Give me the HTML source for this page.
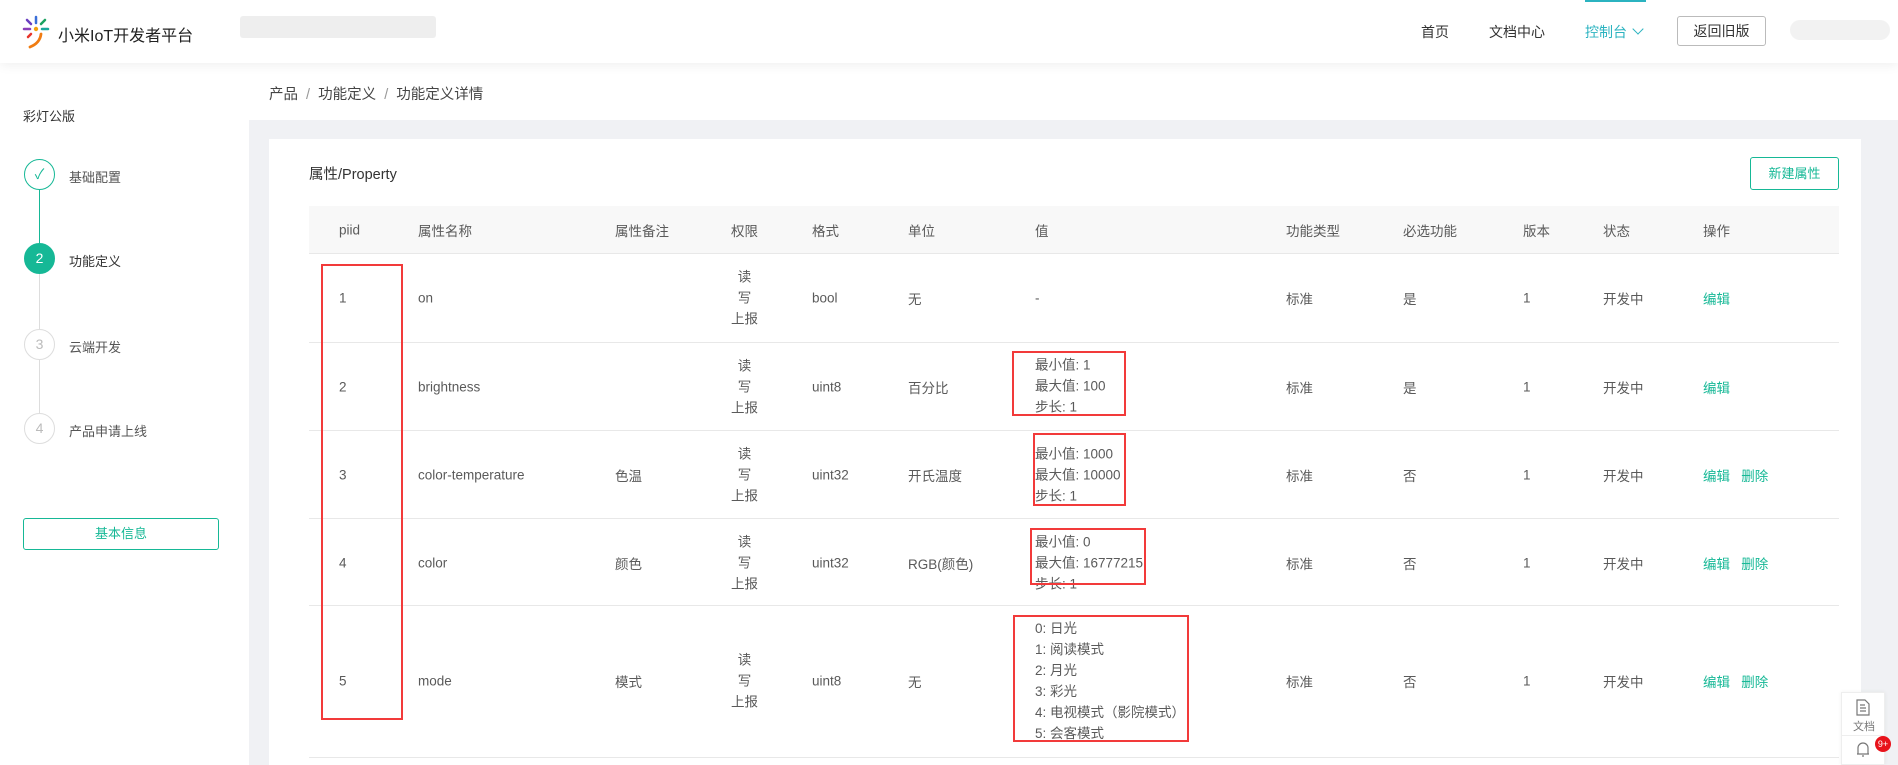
<!DOCTYPE html>
<html><head><meta charset="utf-8"><style>
*{margin:0;padding:0;box-sizing:border-box}
body{width:1898px;height:765px;overflow:hidden;background:#fff;font-family:"Liberation Sans","Noto Sans CJK SC",sans-serif;color:#333;position:relative;font-size:14px}
.a{position:absolute;white-space:nowrap}
.hdr{position:absolute;left:0;top:0;width:1898px;height:63px;background:#fff;box-shadow:0 3px 10px rgba(0,0,0,.06);z-index:2}
.gray{position:absolute;left:249px;top:120px;width:1649px;height:645px;background:#f0f1f4}
.card{position:absolute;left:269px;top:139px;width:1592px;height:626px;background:#fff}
.th{position:absolute;left:309px;top:206px;width:1530px;height:48px;background:#f8f8f8;border-bottom:1px solid #e8e8e8}
.hl{position:absolute;left:309px;width:1530px;height:1px;background:#e8e8e8}
.c{color:#5a5a5a;font-size:13.5px;transform:translateY(-50%)}
.t{color:#16b896}
.red{position:absolute;border:2px solid #f23a3a}
.circ{position:absolute;width:31px;height:31px;border-radius:50%;left:24px;text-align:center;line-height:29px;font-size:14px}
.vline{position:absolute;left:39px;width:1px}
.ml{line-height:21px}
</style></head><body>
<div class="hdr">
  <svg class="a" style="left:22px;top:15px" width="28" height="34" viewBox="0 0 28 34">
    <line x1="14" y1="2" x2="14" y2="8" stroke="#3a6fd8" stroke-width="2.5" stroke-linecap="round"/>
    <line x1="5" y1="5" x2="9" y2="9" stroke="#6a3fc0" stroke-width="2.5" stroke-linecap="round"/>
    <line x1="23" y1="5" x2="19" y2="9" stroke="#1aa260" stroke-width="2.5" stroke-linecap="round"/>
    <line x1="2" y1="14" x2="8" y2="14" stroke="#8a3fb8" stroke-width="2.5" stroke-linecap="round"/>
    <line x1="20" y1="14" x2="26" y2="14" stroke="#19a89b" stroke-width="2.5" stroke-linecap="round"/>
    <circle cx="14" cy="14" r="2.2" fill="#f2a20c"/>
    <line x1="6" y1="22" x2="9" y2="19" stroke="#e8352b" stroke-width="2.5" stroke-linecap="round"/>
    <path d="M19 19 Q18 28 8 32" stroke="#f07c12" stroke-width="2.8" fill="none" stroke-linecap="round"/>
  </svg>
  <div class="a" style="left:58px;top:22px;font-size:16px;color:#222">小米IoT开发者平台</div>
  <div class="a" style="left:240px;top:16px;width:196px;height:22px;background:#eaeaea;border-radius:3px;opacity:.8"></div>
  <div class="a" style="left:1421px;top:22px;font-size:14px">首页</div>
  <div class="a" style="left:1489px;top:22px;font-size:14px">文档中心</div>
  <div class="a" style="left:1585px;top:22px;font-size:14px;color:#2bb3c0">控制台 <span style="display:inline-block;width:8px;height:8px;border-right:1.5px solid #2bb3c0;border-bottom:1.5px solid #2bb3c0;transform:rotate(45deg);margin:0 0 4px 3px"></span></div>
  <div class="a" style="left:1585px;top:0;width:61px;height:2px;background:#2bb3c0"></div>
  <div class="a" style="left:1677px;top:16px;width:89px;height:30px;border:1px solid #bbb;border-radius:3px;text-align:center;line-height:28px;font-size:14px">返回旧版</div>
  <div class="a" style="left:1790px;top:20px;width:100px;height:20px;background:#ececec;border-radius:10px;opacity:.7"></div>
</div>

<div class="a" style="left:23px;top:106px;font-size:13px;color:#333">彩灯公版</div>
<div class="circ" style="top:159px;border:1px solid #16b896;color:#16b896">✓</div>
<div class="vline" style="top:190px;height:53px;background:#16b896"></div>
<div class="a" style="left:69px;top:167px;font-size:13px;color:#555">基础配置</div>
<div class="circ" style="top:243px;background:#16b896;color:#fff;border:1px solid #16b896">2</div>
<div class="vline" style="top:274px;height:55px;background:#ddd"></div>
<div class="a" style="left:69px;top:251px;font-size:13px;color:#333">功能定义</div>
<div class="circ" style="top:329px;border:1px solid #ddd;color:#bbb">3</div>
<div class="vline" style="top:360px;height:53px;background:#ddd"></div>
<div class="a" style="left:69px;top:337px;font-size:13px;color:#555">云端开发</div>
<div class="circ" style="top:413px;border:1px solid #ddd;color:#bbb">4</div>
<div class="a" style="left:69px;top:421px;font-size:13px;color:#555">产品申请上线</div>
<div class="a" style="left:23px;top:518px;width:196px;height:32px;border:1px solid #16b896;border-radius:3px;text-align:center;line-height:30px;font-size:13px;color:#16b896">基本信息</div>

<div class="a" style="left:269px;top:83px;font-size:14.5px;color:#444">产品 <span style="color:#999">&nbsp;/&nbsp;</span> 功能定义 <span style="color:#999">&nbsp;/&nbsp;</span> 功能定义详情</div>
<div class="gray"></div>
<div class="card"></div>
<div class="a" style="left:309px;top:163px;font-size:14.5px;color:#333">属性/Property</div>
<div class="a" style="left:1750px;top:157px;width:89px;height:33px;border:1px solid #16b896;border-radius:3px;text-align:center;line-height:31px;font-size:13px;color:#16b896">新建属性</div>
<div class="th"></div>
<div class="a c" style="left:339px;top:230px">piid</div>
<div class="a c" style="left:418px;top:230px">属性名称</div>
<div class="a c" style="left:615px;top:230px">属性备注</div>
<div class="a c" style="left:731px;top:230px">权限</div>
<div class="a c" style="left:812px;top:230px">格式</div>
<div class="a c" style="left:908px;top:230px">单位</div>
<div class="a c" style="left:1035px;top:230px">值</div>
<div class="a c" style="left:1286px;top:230px">功能类型</div>
<div class="a c" style="left:1403px;top:230px">必选功能</div>
<div class="a c" style="left:1523px;top:230px">版本</div>
<div class="a c" style="left:1603px;top:230px">状态</div>
<div class="a c" style="left:1703px;top:230px">操作</div>

<div class="hl" style="top:342px"></div>
<div class="hl" style="top:430px"></div>
<div class="hl" style="top:518px"></div>
<div class="hl" style="top:605px"></div>
<div class="hl" style="top:757px"></div>

<div class="a c" style="left:339px;top:298px">1</div>
<div class="a c" style="left:418px;top:298px">on</div>
<div class="a c ml" style="left:731px;top:298px;text-align:center">读<br>写<br>上报</div>
<div class="a c" style="left:812px;top:298px">bool</div>
<div class="a c" style="left:908px;top:298px">无</div>
<div class="a c" style="left:1035px;top:298px">-</div>
<div class="a c" style="left:1286px;top:298px">标准</div>
<div class="a c" style="left:1403px;top:298px">是</div>
<div class="a c" style="left:1523px;top:298px">1</div>
<div class="a c" style="left:1603px;top:298px">开发中</div>
<div class="a c t" style="left:1703px;top:298px">编辑</div>

<div class="a c" style="left:339px;top:387px">2</div>
<div class="a c" style="left:418px;top:387px">brightness</div>
<div class="a c ml" style="left:731px;top:387px;text-align:center">读<br>写<br>上报</div>
<div class="a c" style="left:812px;top:387px">uint8</div>
<div class="a c" style="left:908px;top:387px">百分比</div>
<div class="a c ml" style="left:1035px;top:386px">最小值: 1<br>最大值: 100<br>步长: 1</div>
<div class="a c" style="left:1286px;top:387px">标准</div>
<div class="a c" style="left:1403px;top:387px">是</div>
<div class="a c" style="left:1523px;top:387px">1</div>
<div class="a c" style="left:1603px;top:387px">开发中</div>
<div class="a c t" style="left:1703px;top:387px">编辑</div>

<div class="a c" style="left:339px;top:475px">3</div>
<div class="a c" style="left:418px;top:475px">color-temperature</div>
<div class="a c" style="left:615px;top:475px">色温</div>
<div class="a c ml" style="left:731px;top:475px;text-align:center">读<br>写<br>上报</div>
<div class="a c" style="left:812px;top:475px">uint32</div>
<div class="a c" style="left:908px;top:475px">开氏温度</div>
<div class="a c ml" style="left:1035px;top:475px">最小值: 1000<br>最大值: 10000<br>步长: 1</div>
<div class="a c" style="left:1286px;top:475px">标准</div>
<div class="a c" style="left:1403px;top:475px">否</div>
<div class="a c" style="left:1523px;top:475px">1</div>
<div class="a c" style="left:1603px;top:475px">开发中</div>
<div class="a c t" style="left:1703px;top:475px">编辑&nbsp;&nbsp;&nbsp;删除</div>

<div class="a c" style="left:339px;top:563px">4</div>
<div class="a c" style="left:418px;top:563px">color</div>
<div class="a c" style="left:615px;top:563px">颜色</div>
<div class="a c ml" style="left:731px;top:563px;text-align:center">读<br>写<br>上报</div>
<div class="a c" style="left:812px;top:563px">uint32</div>
<div class="a c" style="left:908px;top:563px">RGB(颜色)</div>
<div class="a c ml" style="left:1035px;top:563px">最小值: 0<br>最大值: 16777215<br>步长: 1</div>
<div class="a c" style="left:1286px;top:563px">标准</div>
<div class="a c" style="left:1403px;top:563px">否</div>
<div class="a c" style="left:1523px;top:563px">1</div>
<div class="a c" style="left:1603px;top:563px">开发中</div>
<div class="a c t" style="left:1703px;top:563px">编辑&nbsp;&nbsp;&nbsp;删除</div>

<div class="a c" style="left:339px;top:681px">5</div>
<div class="a c" style="left:418px;top:681px">mode</div>
<div class="a c" style="left:615px;top:681px">模式</div>
<div class="a c ml" style="left:731px;top:681px;text-align:center">读<br>写<br>上报</div>
<div class="a c" style="left:812px;top:681px">uint8</div>
<div class="a c" style="left:908px;top:681px">无</div>
<div class="a c ml" style="left:1035px;top:681px">0: 日光<br>1: 阅读模式<br>2: 月光<br>3: 彩光<br>4: 电视模式（影院模式）<br>5: 会客模式</div>
<div class="a c" style="left:1286px;top:681px">标准</div>
<div class="a c" style="left:1403px;top:681px">否</div>
<div class="a c" style="left:1523px;top:681px">1</div>
<div class="a c" style="left:1603px;top:681px">开发中</div>
<div class="a c t" style="left:1703px;top:681px">编辑&nbsp;&nbsp;&nbsp;删除</div>

<div class="red" style="left:321px;top:264px;width:82px;height:456px"></div>
<div class="red" style="left:1012px;top:351px;width:114px;height:65px"></div>
<div class="red" style="left:1033px;top:433px;width:93px;height:73px"></div>
<div class="red" style="left:1030px;top:528px;width:116px;height:57px"></div>
<div class="red" style="left:1013px;top:615px;width:176px;height:127px"></div>

<div class="a" style="left:1841px;top:692px;width:44px;height:73px;background:#fff;border:1px solid #eee;box-shadow:0 0 4px rgba(0,0,0,.06)">
  <svg class="a" style="left:14px;top:6px" width="14" height="17" viewBox="0 0 14 17"><path d="M1 1h8l4 4v11H1z M4 6h5 M4 9h6 M4 12h6" stroke="#777" fill="none" stroke-width="1.2"/></svg>
  <div class="a" style="left:11px;top:25px;font-size:11px;color:#777">文档</div>
  <div class="a" style="left:0;top:42px;width:44px;height:1px;background:#eee"></div>
  <svg class="a" style="left:14px;top:48px" width="14" height="17" viewBox="0 0 14 17"><path d="M2 13V7a5 5 0 0 1 10 0v6H1h12 M6 15h2" stroke="#777" fill="none" stroke-width="1.2"/></svg>
  <div class="a" style="left:33px;top:43px;width:16px;height:16px;border-radius:50%;background:#e8131b;color:#fff;font-size:9px;text-align:center;line-height:16px">9+</div>
</div>
</body></html>
